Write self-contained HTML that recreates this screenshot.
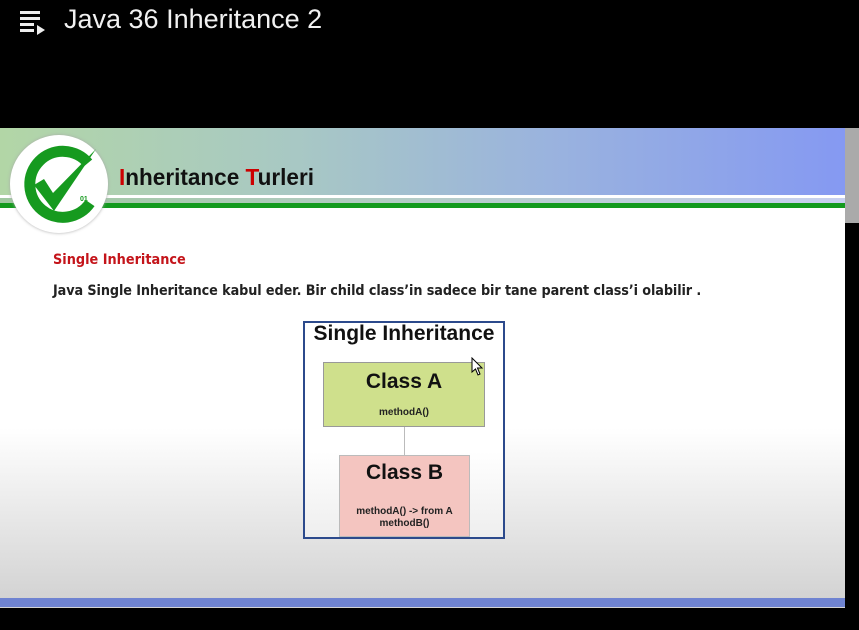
<!DOCTYPE html>
<html><head><style>
body{margin:0;width:859px;height:630px;background:#000;position:relative;overflow:hidden;font-family:"Liberation Sans",sans-serif}
.abs{position:absolute}
</style></head><body>
<svg class="abs" style="left:20px;top:11px" width="28" height="24" viewBox="0 0 28 24">
<rect x="0" y="0" width="20" height="3" fill="#eee"/><rect x="0" y="6" width="20" height="3" fill="#eee"/><rect x="0" y="12" width="14" height="3" fill="#eee"/><rect x="0" y="18" width="14" height="3" fill="#eee"/><polygon points="17,14 17,24 25,19" fill="#eee"/></svg>
<div class="abs" style="left:64px;top:4px;color:#f1f1f1;font-size:27px">Java 36 Inheritance 2</div>

<div class="abs" style="left:0;top:128px;width:845px;height:480px;background:linear-gradient(#fff 0,#fff 300px,#d3d3d3 470px)"></div>
<div class="abs" style="left:0;top:128px;width:845px;height:67px;background:linear-gradient(90deg,#b2d6a6 0%,#a8c8c4 35%,#9ab3de 65%,#8599f2 100%)"></div>
<div class="abs" style="left:0;top:195px;width:845px;height:3px;background:#fff"></div>
<div class="abs" style="left:0;top:198px;width:845px;height:5px;background:linear-gradient(90deg,#a0c8a0,#c8d0f0)"></div>
<div class="abs" style="left:0;top:203px;width:845px;height:5px;background:#139a1e"></div>
<div class="abs" style="left:0;top:598px;width:845px;height:9px;background:#6f83d1"></div>
<div class="abs" style="left:845px;top:128px;width:14px;height:95px;background:#aaa"></div>

<div class="abs" style="left:10px;top:135px;width:98px;height:98px;border-radius:50%;background:#fff;box-shadow:0 0 3px #aaa"></div>
<svg class="abs" style="left:10px;top:135px" width="98" height="98" viewBox="0 0 98 98">
<path d="M78 28 A33 33 0 1 0 80 68" stroke="#169a1f" stroke-width="11" fill="none"/>
<path d="M24 50 L34 44 L43 58 L86 14 L44 76 Z" fill="#169a1f"/>
<text x="70" y="66" font-size="7" fill="#169a1f" font-weight="bold">01</text>
</svg>
<div class="abs" style="left:119px;top:164px;font-size:23px;font-weight:bold;color:#111;transform:scaleX(0.98);transform-origin:left"><span style="color:#c00">I</span>nheritance <span style="color:#c00">T</span>urleri</div>

<div class="abs" style="left:53px;top:252px;font-size:14px;color:#c4141a;font-weight:bold;font-family:'DejaVu Sans',sans-serif;transform:scaleX(0.92);transform-origin:left">Single Inheritance</div>
<div class="abs" style="left:53px;top:283px;font-size:14px;color:#222;font-weight:bold;font-family:'DejaVu Sans',sans-serif;letter-spacing:-0.1px;transform:scaleX(0.915);transform-origin:left">Java Single Inheritance kabul eder. Bir child class’in sadece bir tane parent class’i olabilir .</div>

<div class="abs" style="left:303px;top:321px;width:198px;height:214px;border:2px solid #2c4a8c;background:linear-gradient(#fff 60%,#eee)"></div>
<div class="abs" style="left:305px;top:322px;width:198px;text-align:center;font-size:21px;font-weight:bold;color:#111">Single Inheritance</div>
<div class="abs" style="left:323px;top:362px;width:160px;height:63px;background:#cfe08c;border:1px solid #999"></div>
<div class="abs" style="left:323px;top:370px;width:162px;text-align:center;font-size:21px;font-weight:bold;color:#111">Class A</div>
<div class="abs" style="left:323px;top:407px;width:162px;text-align:center;font-size:10px;font-weight:bold;color:#222">methodA()</div>
<div class="abs" style="left:404px;top:427px;width:1px;height:28px;background:#bbb"></div>
<div class="abs" style="left:339px;top:455px;width:129px;height:80px;background:#f4c5c0;border:1px solid #bbb"></div>
<div class="abs" style="left:339px;top:461px;width:131px;text-align:center;font-size:21px;font-weight:bold;color:#111">Class B</div>
<div class="abs" style="left:339px;top:506px;width:131px;text-align:center;font-size:10px;font-weight:bold;color:#222;line-height:12px">methodA() -&gt; from A<br>methodB()</div>
<svg class="abs" style="left:471px;top:357px" width="14" height="20" viewBox="0 0 14 20"><path d="M1 1 L1 15 L4.5 12 L7 18 L9 17 L6.5 11 L11 11 Z" fill="#fff" stroke="#000" stroke-width="1"/></svg>
</body></html>
